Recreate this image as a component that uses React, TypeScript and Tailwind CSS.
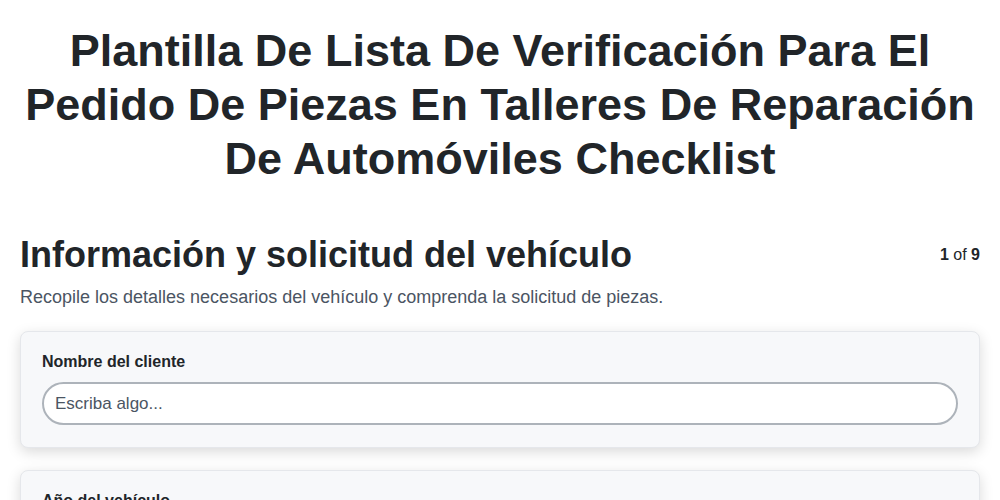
import React from "react";

const fields = ["Nombre del cliente", "Año del vehículo"];

const App = () => {
  return (
    <div className="min-h-screen bg-white px-5 text-[#212529]" style={{ fontFamily: '"Liberation Sans", Arial, sans-serif' }}>
      <h1 className="pt-[24px] text-center text-[45px] font-bold leading-[54px]">
        Plantilla De Lista De Verificación Para El Pedido De Piezas En Talleres De Reparación De Automóviles Checklist
      </h1>

      <div className="mt-[47px] flex items-start justify-between">
        <h2 className="text-[36px] font-bold leading-[44px]">Información y solicitud del vehículo</h2>
        <div className="pt-[10px] text-base">
          <span className="font-bold">1</span> of <span className="font-bold">9</span>
        </div>
      </div>
      <p className="mt-[8px] text-[18px] leading-[24px] text-[#4b5563]">
        Recopile los detalles necesarios del vehículo y comprenda la solicitud de piezas.
      </p>

      <div className="mt-[22px] flex flex-col gap-[22px]">
        {fields.map((label) => (
          <div
            key={label}
            className="rounded-lg border border-[#e5e7eb] bg-[#f7f8fa] px-[21px] pt-[20px] pb-[22px] shadow-[0_4px_14px_rgba(0,0,0,0.15)]"
          >
            <label className="block text-base font-bold leading-[20px]">{label}</label>
            <input
              type="text"
              placeholder="Escriba algo..."
              className="mt-[10px] h-[43px] w-full rounded-full border-2 border-[#adb3ba] bg-white px-[11px] text-[17px] text-[#212529] placeholder:text-[#4b5563] outline-none"
            />
          </div>
        ))}
      </div>
    </div>
  );
};

export default App;
